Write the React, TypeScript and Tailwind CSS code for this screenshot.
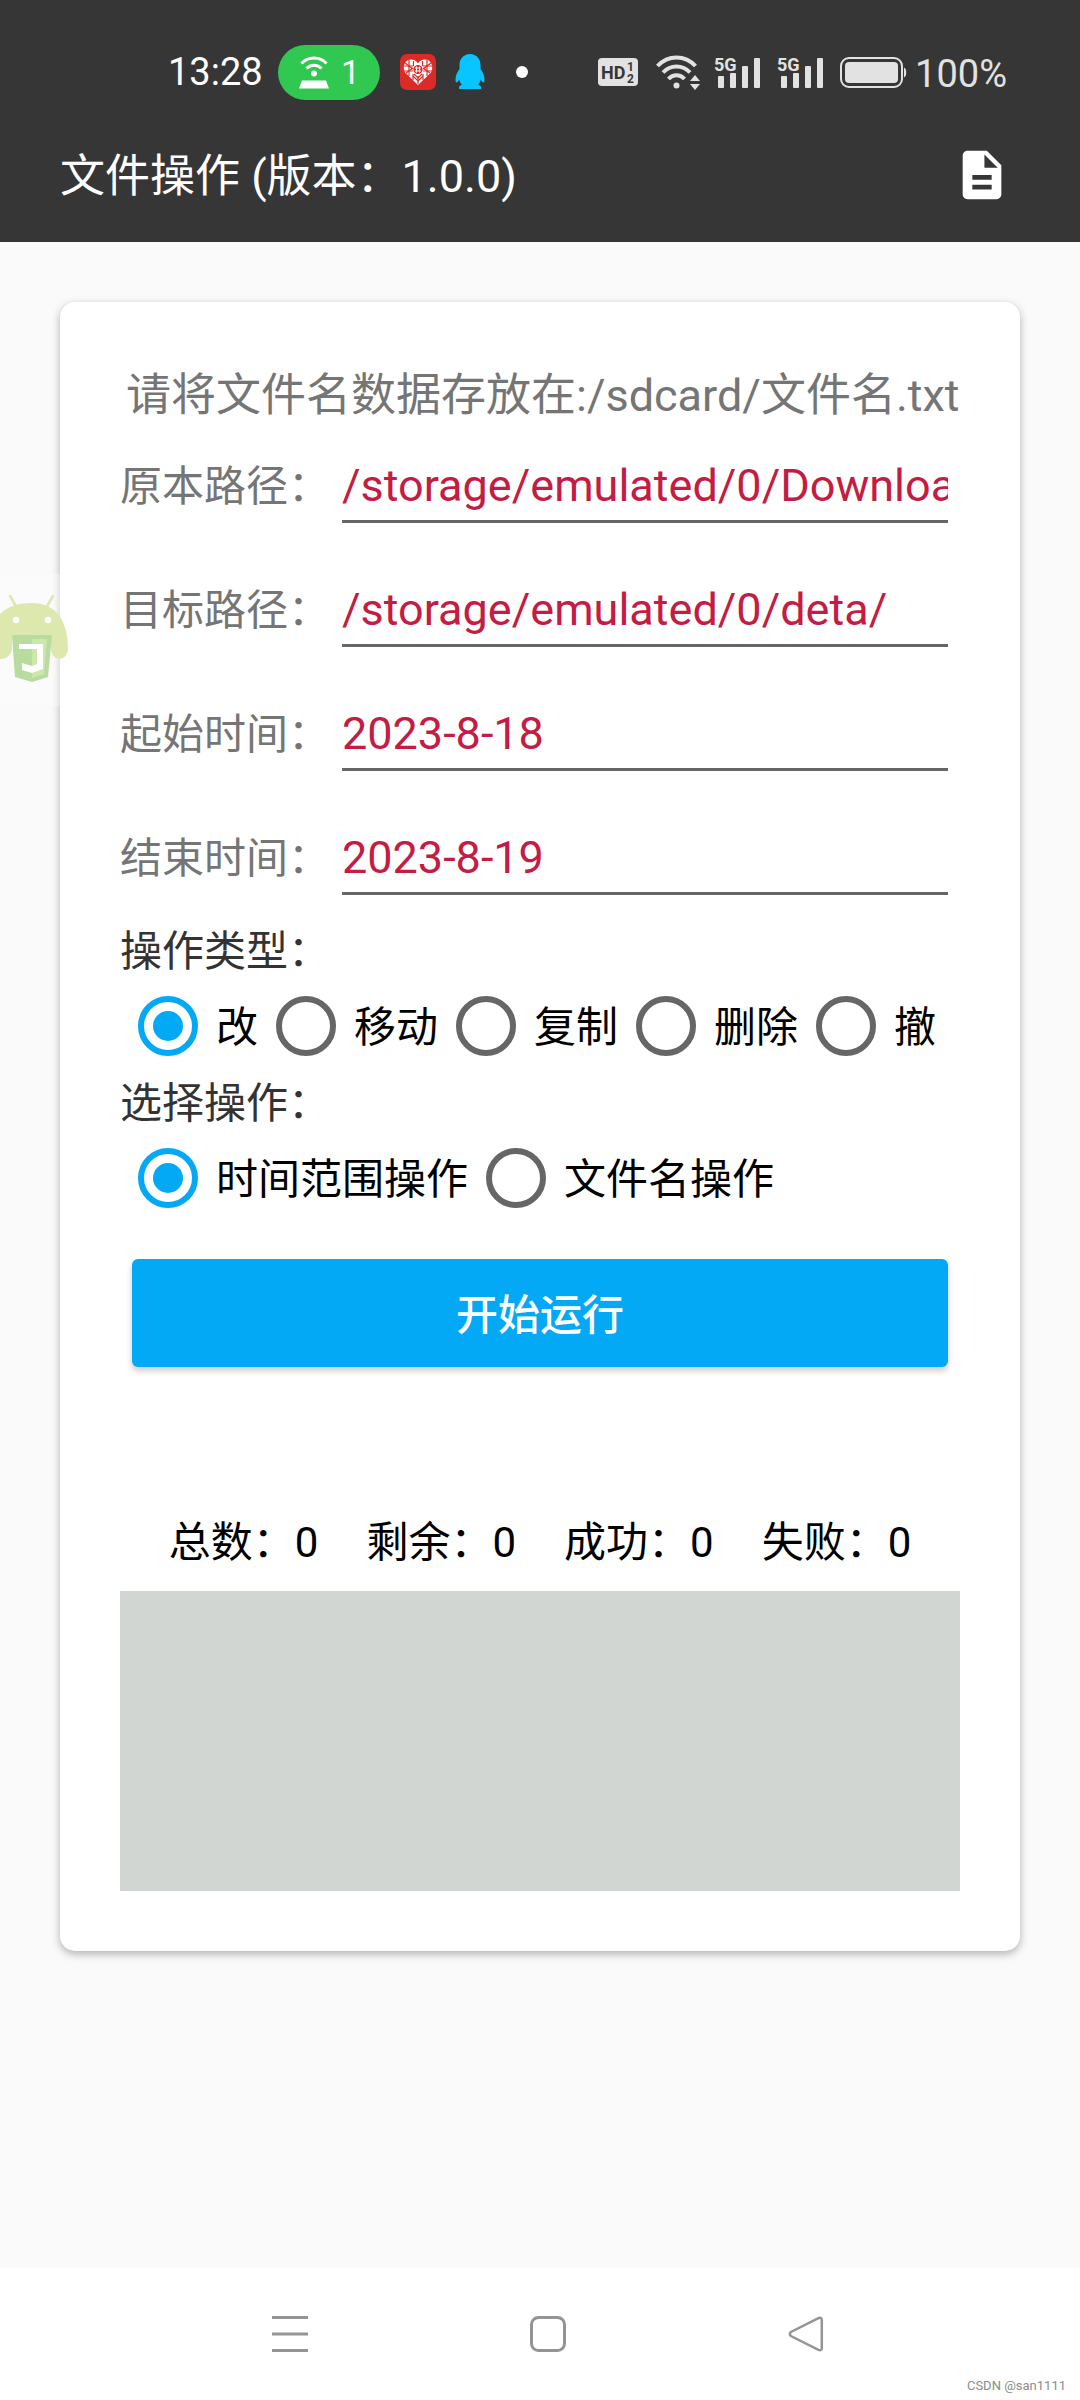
import { useState } from "react";
import { MdDescription } from "react-icons/md";

type Field = {
  id: string;
  label: string;
  value: string;
};

const initialFields: Field[] = [
  { id: "source", label: "原本路径：", value: "/storage/emulated/0/Download/" },
  { id: "target", label: "目标路径：", value: "/storage/emulated/0/deta/" },
  { id: "start", label: "起始时间：", value: "2023-8-18" },
  { id: "end", label: "结束时间：", value: "2023-8-19" },
];

const operations = ["改", "移动", "复制", "删除", "撤"];
const modes = ["时间范围操作", "文件名操作"];
const stats = ["总数", "剩余", "成功", "失败"];

function HotspotPill() {
  return (
    <div className="flex h-[55px] w-[102px] items-center justify-between rounded-full bg-[#30c850] pr-5 pl-[21px]">
      <svg width="30" height="33" viewBox="0 0 30 33" fill="none" stroke="#fff" strokeWidth="3">
        <path d="M2.500 7.500C9 0 21 0 27.500 7.500" />
        <path d="M7.500 12.500C11.500 8 18.500 8 22.500 12.500" />
        <circle cx="15" cy="17.500" r="3" fill="#fff" stroke="none" />
        <path d="M3 24.500h24l3 8H0z" fill="#fff" stroke="none" />
      </svg>
      <span className="text-[34px] leading-none text-white">1</span>
    </div>
  );
}

function ShopIcon() {
  return (
    <svg width="36" height="36" viewBox="0 0 36 36" fill="none">
      <rect width="36" height="36" rx="7" fill="#dc2a26" />
      <path d="M18 31 5 18.500C2.500 14 4 8 8 6c4-1.500 8 0 10 3.500C20 6 24 4.500 28 6c4 2 5.500 8 3 12.500z" fill="#fff" />
      <g stroke="#dc2a26" strokeWidth="1.200">
        <path d="M9 6v16M13.500 7v5M22.500 7v5M27 6v16M4 12h9M23 12h9M4 17h9M23 17h9M13 20v6M23 20v6M18 22v8" />
        <path d="m5 9 8 6M31 9l-8 6M6 19l7-5M30 19l-7-5M13 22l5 5 5-5M14 20l4 4 4-4" />
      </g>
      <circle cx="18" cy="15.500" r="4.500" fill="#dc2a26" />
      <path d="M15 14h6M15 17h6M16.500 12.500v6M19.500 12.500v6" stroke="#fff" strokeWidth="1" />
    </svg>
  );
}

function PenguinIcon() {
  return (
    <svg width="30" height="36" viewBox="0 0 30 36" fill="#08c4ff">
      <path d="M15 0C8.500 0 4.500 5 4.500 11v4C2.500 18 .5 21.500.5 25c0 2 .2 3.500.8 3.500.8 0 2-1.300 2.900-3 .4 2 1.300 3.800 2.700 5.200-1.600.6-2.900 1.500-2.900 2.600V35h22v-1.700c0-1.100-1.300-2-2.900-2.600 1.400-1.400 2.300-3.200 2.700-5.200.9 1.700 2.100 3 2.900 3 .6 0 .8-1.500.8-3.500 0-3.500-2-7-4-10v-4C25.500 5 21.500 0 15 0z" />
    </svg>
  );
}

function HdIcon() {
  return (
    <svg width="40" height="28" viewBox="0 0 40 28">
      <rect width="40" height="28" rx="4" fill="#e2e2e2" />
      <text x="3" y="21" fill="#363636" className="text-[18px] font-bold">HD</text>
      <text x="29" y="13" fill="#363636" className="text-[12px] font-bold">1</text>
      <text x="29" y="25" fill="#363636" className="text-[12px] font-bold">2</text>
    </svg>
  );
}

function WifiIcon() {
  return (
    <svg width="46" height="35" viewBox="0 0 46 35" fill="none" stroke="#e2e2e2" strokeWidth="4">
      <path d="M1.500 11C12-.5 29-.5 39.500 11" />
      <path d="M7 17.500c7.500-8 19.500-8 27 0" />
      <path d="M12.500 24c4.500-5 11.500-5 16 0" />
      <circle cx="20.500" cy="30.500" r="3" fill="#e2e2e2" stroke="none" />
      <path d="m39 20 5 6H34zM39 35l5-6H34z" fill="#e2e2e2" stroke="none" />
    </svg>
  );
}

function SignalIcon() {
  return (
    <svg width="47" height="45" viewBox="0 -6 47 45" fill="#e2e2e2">
      <text x="0" y="15" className="text-[18px] font-bold">5G</text>
      <rect x="4" y="20" width="6" height="12" rx="1" />
      <rect x="16" y="17" width="6" height="15" rx="1" />
      <rect x="28" y="10" width="6" height="22" rx="1" />
      <rect x="40" y="2" width="6" height="30" rx="1" />
    </svg>
  );
}

function BatteryIcon() {
  return (
    <svg width="67" height="31" viewBox="0 0 67 31" fill="none">
      <rect x="1" y="1" width="61" height="29" rx="8" stroke="#e2e2e2" strokeWidth="2" />
      <rect x="5" y="5" width="53" height="21" rx="4" fill="#e2e2e2" />
      <path d="M64 10.500c3 1 3 9 0 10z" fill="#e2e2e2" />
    </svg>
  );
}

function StatusBar() {
  return (
    <div className="flex h-[108px] items-center justify-between pt-9 pr-[73px] pl-[168px]">
      <div className="flex items-center">
        <span className="w-[110px] text-[38px] leading-none text-white">13:28</span>
        <HotspotPill />
        <div className="ml-5 flex items-center gap-[19px]">
          <ShopIcon />
          <PenguinIcon />
        </div>
        <div className="ml-[31px] size-3 rounded-full bg-white" />
      </div>
      <div className="flex items-center text-[#e2e2e2]">
        <HdIcon />
        <div className="mr-4 ml-[18px] flex items-center gap-3">
          <WifiIcon />
          <div className="flex gap-4">
            <SignalIcon />
            <SignalIcon />
          </div>
        </div>
        <BatteryIcon />
        <span className="ml-2 pt-1 text-[38px] leading-none">100%</span>
      </div>
    </div>
  );
}

function RadioRow({ name, options }: { name: string; options: string[] }) {
  const [selected, setSelected] = useState(options[0]);

  return (
    <div className="flex h-[90px] items-center gap-[18px] pl-[18px]">
      {options.map((option) => (
        <label key={option} className="flex items-center gap-[18px] text-[42px] leading-[56px] whitespace-nowrap text-black">
          <input
            type="radio"
            name={name}
            checked={selected === option}
            onChange={() => setSelected(option)}
            className="size-[60px] shrink-0 appearance-none rounded-full border-[6px] border-[#666] bg-clip-content p-[9px] checked:border-[#03a9f4] checked:bg-[#03a9f4]"
          />
          <span className="pt-1">{option}</span>
        </label>
      ))}
    </div>
  );
}

// Floating handle of the script runner, docked on the left edge
function FloatingBall() {
  return (
    <button aria-label="悬浮窗" className="absolute top-[574px] left-0 bg-white/30 py-5">
      <svg width="69" height="92" viewBox="0 0 69 92">
        <g fill="#dce8ae" stroke="#dce8ae">
          <path d="M10 2l7 12M53 2l-7 12" strokeWidth="2.500" strokeLinecap="round" />
          <path d="M0 20C8 12 19 9 32 9c23 0 36 17 36 45 0 14-15 14-17 2V41H12v15c-2 6-6 9-12 9z" stroke="none" />
        </g>
        <circle cx="16" cy="26" r="3.200" fill="#fff" />
        <circle cx="48" cy="26" r="3.200" fill="#fff" />
        <path d="M12 41h40l-4 42-16 5-17-5z" fill="#b9dba0" />
        <path d="M32 45h15l-3 35-12 4z" fill="#cbe8a8" />
        <path d="M19 50h24v25l-11 4-10-3v-7l10 3 5-2V55H19z" fill="#fff" />
      </svg>
    </button>
  );
}

function NavBar() {
  return (
    <nav className="relative flex h-[132px] items-center justify-center gap-[222px] bg-white pl-4">
      <button aria-label="最近任务">
        <svg width="36" height="36" viewBox="0 0 36 36" stroke="#949494" strokeWidth="3">
          <path d="M0 1.500h36M0 18h36M0 34.500h36" />
        </svg>
      </button>
      <button aria-label="主屏幕">
        <svg width="36" height="36" viewBox="0 0 36 36" fill="none" stroke="#949494" strokeWidth="3">
          <rect x="1.500" y="1.500" width="33" height="33" rx="7" />
        </svg>
      </button>
      <button aria-label="返回">
        <svg width="36" height="36" viewBox="0 0 36 36" fill="none" stroke="#949494" strokeWidth="2.500" strokeLinejoin="round">
          <path d="M30.500 2.200 2.800 16Q1 18 2.800 20L30.500 33.800Q33.800 35 33.800 32V4Q33.800 1 30.500 2.200z" />
        </svg>
      </button>
      <span className="absolute right-[14px] bottom-1 text-[13px] leading-5 text-[#8c8c8c]">CSDN @san1111</span>
    </nav>
  );
}

export default function App() {
  const [fields, setFields] = useState(initialFields);

  const handleChange = (id: string, value: string) => {
    setFields(fields.map((field) => (field.id === id ? { ...field, value } : field)));
  };

  return (
    <div className="relative flex min-h-screen flex-col bg-[#fafafa] font-[Roboto,'Noto_Sans_CJK_SC',sans-serif]">
      <header className="bg-[#363636]">
        <StatusBar />
        <div className="flex h-[134px] items-center justify-between pr-[69px] pl-[60px]">
          <h1 className="pt-1 text-[45px] leading-[60px] text-white">文件操作 (版本：1.0.0)</h1>
          <button aria-label="日志" className="text-white">
            <MdDescription size={58} />
          </button>
        </div>
      </header>

      <main className="flex-1 p-[60px]">
        <form
          onSubmit={(e) => e.preventDefault()}
          className="rounded-[15px] bg-white p-[60px] shadow-[0_3px_8px_rgba(0,0,0,0.3)]"
        >
          <p className="px-[6px] pt-1 text-[45px] leading-[60px] whitespace-nowrap text-[#757575]">
            请将文件名数据存放在:/sdcard/文件名.txt
          </p>

          <div className="mt-[21px] flex flex-col gap-12 pr-3">
            {fields.map((field) => (
              <div key={field.id} className="flex h-[76px] items-stretch">
                <label htmlFor={field.id} className="w-[222px] shrink-0 pt-1 text-[42px] leading-[72px] text-[#757575]">
                  {field.label}
                </label>
                <input
                  id={field.id}
                  value={field.value}
                  onChange={(e) => handleChange(field.id, e.target.value)}
                  className="min-w-0 flex-1 border-b-[3px] border-[#666] pt-1 text-[45px] text-[#c41c42] outline-none"
                />
              </div>
            ))}
          </div>

          <p className="mt-6 pt-1 text-[42px] leading-[58px] text-[#333]">操作类型：</p>
          <RadioRow name="operation" options={operations} />
          <p className="pt-1 text-[42px] leading-[58px] text-[#333]">选择操作：</p>
          <RadioRow name="mode" options={modes} />

          <div className="mt-9 px-3">
            <button
              type="submit"
              className="h-[108px] w-full rounded-[6px] bg-[#03a9f4] pt-1 text-[42px] font-medium text-white shadow-[0_4px_6px_rgba(0,0,0,0.2)]"
            >
              开始运行
            </button>
          </div>

          <div className="mt-36 flex justify-center gap-12 pt-1 text-[42px] leading-[56px] text-black">
            {stats.map((name) => (
              <span key={name}>{name}：0</span>
            ))}
          </div>

          <textarea
            readOnly
            aria-label="运行日志"
            className="mt-5 block h-[300px] w-full resize-none bg-[#d2d6d2] outline-none"
          />
        </form>
      </main>

      <FloatingBall />
      <NavBar />
    </div>
  );
}
